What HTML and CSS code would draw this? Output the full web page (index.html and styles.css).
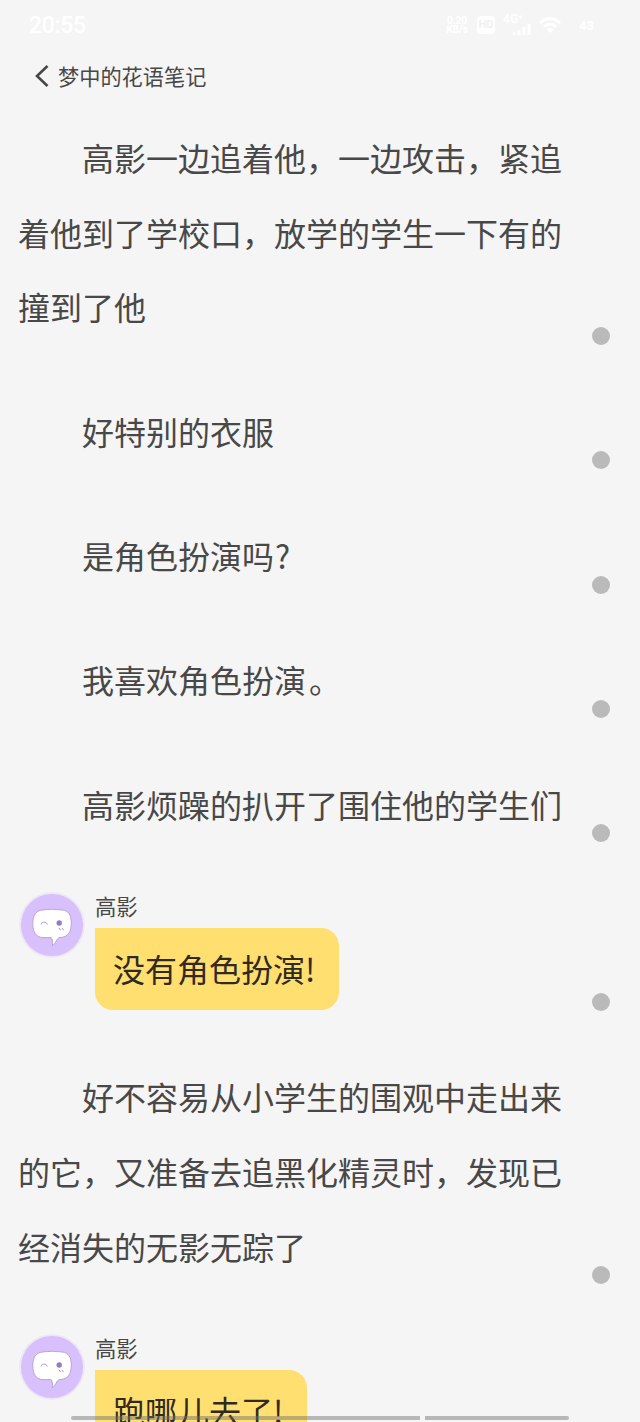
FILE: index.html
```html
<!DOCTYPE html>
<html lang="zh-CN">
<head>
<meta charset="utf-8">
<title>梦中的花语笔记</title>
<link rel="stylesheet" href="styles.css">
</head>
<body>
<svg class="defs" aria-hidden="true">
  <symbol id="face" viewBox="0 0 66 66">
    <circle cx="33" cy="33" r="32.8" fill="#ece6f5"/>
    <circle cx="33" cy="33" r="31" fill="#d7c0fb"/>
    <path d="M24 18C28 17.200 30 17.800 33 17.200C36 17.800 39 17.400 43 18C49.500 18.500 52.300 23 52.300 31C52.300 40 49 44.500 43 45.300L40 45.600C37.500 47 37 51 33.400 54C33.800 50.500 33.600 47.500 32.200 45.600H24C17 45.300 13.800 40 13.800 31.500C13.800 23 17 18.500 24 18Z" fill="#fff" stroke="#b49fce" stroke-width=".9"/>
    <path d="M22 32.600Q22.500 30 25 30Q27.500 30 28.500 32.600" fill="none" stroke="#b5a5ca" stroke-width="1"/>
    <circle cx="40.200" cy="31" r="2.700" fill="#947bc4"/>
    <path d="M40 35.800l1.500 2.400M43 36l1.600 2.200" stroke="#a893c4" stroke-width="1"/>
  </symbol>
</svg>
<div class="screen">
  <header class="status">
    <span class="clock">20:55</span>
    <div class="indicators">
      <span class="speed">0.20<br>KB/s</span>
      <span class="hd">HD</span>
      <span class="network">4G⁺<svg viewBox="0 0 18 11"><path d="M1 11V8M6 11V6M11 11V3M16 11V0" stroke="currentColor" stroke-width="3"/></svg></span>
      <svg class="wifi" viewBox="0 0 22 17"><path d="M1 6Q11-3 21 6M5 10Q11 4 17 10" fill="none" stroke="currentColor" stroke-width="3"/><path d="M7.500 12.500Q11 9 14.500 12.500L11 16Z" fill="currentColor"/></svg>
      <span class="battery">43</span>
    </div>
  </header>
  <nav class="nav">
    <svg class="back" viewBox="0 0 14 24"><path d="M12.500 2L2 12L12.500 22" fill="none" stroke="currentColor" stroke-width="2.600"/></svg>
    <h1 class="title">梦中的花语笔记</h1>
  </nav>
  <main class="story">
    <section class="row"><p class="text">高影一边追着他，一边攻击，紧追<br>着他到了学校口，放学的学生一下有的<br>撞到了他</p><i class="dot"></i></section>
    <section class="row"><p class="text">好特别的衣服</p><i class="dot"></i></section>
    <section class="row"><p class="text">是角色扮演吗<span class="ask">?</span></p><i class="dot"></i></section>
    <section class="row"><p class="text">我喜欢角色扮演<span class="stop">。</span></p><i class="dot"></i></section>
    <section class="row"><p class="text">高影烦躁的扒开了围住他的学生们</p><i class="dot"></i></section>
    <section class="row chat">
      <svg class="avatar"><use href="#face"/></svg>
      <div class="speech"><span class="name">高影</span><p class="bubble">没有角色扮演!</p></div>
      <i class="dot"></i>
    </section>
    <section class="row"><p class="text">好不容易从小学生的围观中走出来<br>的它，又准备去追黑化精灵时，发现已<br>经消失的无影无踪了</p><i class="dot"></i></section>
    <section class="row chat">
      <svg class="avatar"><use href="#face"/></svg>
      <div class="speech"><span class="name">高影</span><p class="bubble">跑哪儿去了!</p></div>
      <i class="dot"></i>
    </section>
  </main>
  <div class="homebar"><i class="track long"></i><i class="track short"></i></div>
</div>
</body>
</html>
```

FILE: styles.css
```css
* { box-sizing: border-box; margin: 0; padding: 0; }

body {
  background: #f5f5f5;
  color: #484848;
  font-family: "Noto Sans CJK SC", sans-serif;
}

.defs { display: none; }

.screen {
  position: relative;
  display: flex;
  flex-direction: column;
  width: 640px;
  height: 1422px;
  overflow: hidden;
}

.status {
  display: flex;
  flex: none;
  justify-content: space-between;
  align-items: center;
  height: 50px;
  padding: 0 26px 0 29px;
  color: #fff;
  font-family: Roboto, sans-serif;
}

.clock { font-size: 23px; font-weight: 500; letter-spacing: -0.3px; }

.indicators { display: flex; align-items: center; gap: 8px; }

.speed { width: 24px; font-size: 10px; line-height: 9px; text-align: center; font-weight: 700; }

.hd {
  width: 18px;
  height: 18px;
  border-radius: 4px;
  background: #fff;
  color: #f0f0f0;
  font-size: 11px;
  font-weight: 700;
  line-height: 18px;
  text-align: center;
}

.network { display: flex; flex-direction: column; width: 28px; font-size: 12px; font-weight: 700; line-height: 9px; }
.network svg { width: 18px; height: 11px; align-self: flex-end; }
.wifi { width: 22px; height: 17px; }
.battery { width: 45px; padding-left: 10px; font-size: 13px; font-weight: 700; }

.nav {
  display: flex;
  flex: none;
  align-items: center;
  height: 52px;
  padding-left: 35px;
  gap: 9px;
}

.back { width: 14px; height: 24px; }
.title { padding-bottom: 2px; font-size: 21.2px; font-weight: 400; line-height: 29px; white-space: nowrap; }

.story { flex: none; padding-top: 18px; }

.row {
  display: flex;
  justify-content: space-between;
  align-items: flex-end;
  padding: 0 30px 49.8px 18px;
}

.text {
  font-size: 32px;
  line-height: 74.6px;
  text-indent: 64px;
  white-space: nowrap;
}

.stop { margin-left: 3px; }
.ask { margin-left: 1px; }

.dot {
  flex: none;
  width: 18px;
  height: 18px;
  margin-bottom: -1px;
  border-radius: 50%;
  background: #bababa;
}

.chat { justify-content: flex-start; padding-bottom: 49.2px; }

.avatar { flex: none; align-self: flex-start; width: 66px; height: 66px; margin: 1px 0 0 1px; }

.speech { display: flex; flex-direction: column; align-items: flex-start; margin-left: 10px; padding-top: 2px; }

.name { height: 35px; font-size: 21.3px; line-height: 26px; }

.bubble {
  height: 82px;
  padding: 0 24px 0 18px;
  border-radius: 0 18px 18px 18px;
  background: #ffdf70;
  color: #302a20;
  font-size: 32px;
  line-height: 80px;
  white-space: nowrap;
}

.chat .dot { margin: 0 0 -0.5px auto; }

.homebar {
  position: absolute;
  right: 71px;
  bottom: 2px;
  left: 71px;
  display: flex;
  gap: 5px;
}

.track { height: 4px; background: rgba(110, 110, 110, 0.46); }
.long { width: 349px; border-radius: 2px 0 0 2px; }
.short { width: 144px; border-radius: 0 2px 2px 0; }
```
